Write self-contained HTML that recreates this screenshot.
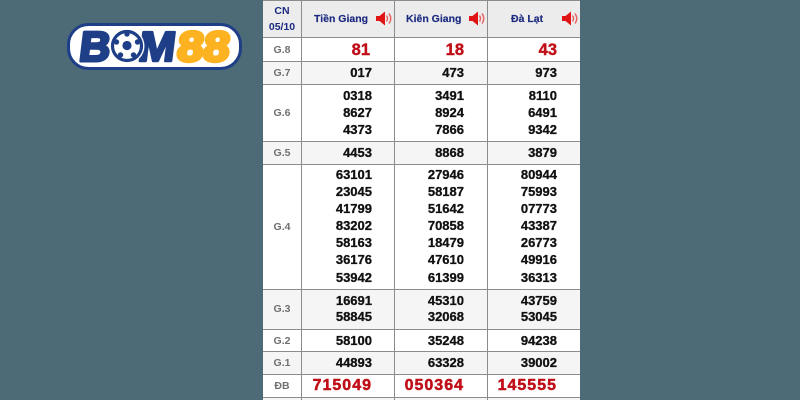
<!DOCTYPE html>
<html><head><meta charset="utf-8"><style>
html,body{margin:0;padding:0}
body{width:800px;height:400px;overflow:hidden;background:#4c6b77;position:relative;font-family:"Liberation Sans",sans-serif}
#t{position:absolute;left:263px;top:0;width:317px;height:400px;background:#fff;filter:blur(.35px)}
.b{position:absolute;left:0;width:317px;background:#f5f5f5}
.h{position:absolute;left:0;width:317px;height:1px;background:#8c8c8c}
.v{position:absolute;top:0;width:1px;height:400px;background:#8c8c8c}
.n{position:absolute;width:80px;text-align:right;font-weight:bold;font-size:13px;line-height:16px;color:#111;-webkit-text-stroke:.3px #111}
.c1{left:29px}.c2{left:121px}.c3{left:214px}
.l{position:absolute;left:0;width:38px;text-align:center;font-weight:bold;font-size:10.5px;line-height:12px;color:#707070}
.r{position:absolute;width:80px;text-align:right;font-weight:bold;font-size:16.5px;line-height:18px;color:#c00f18;-webkit-text-stroke:.4px #c00f18}
.d{position:absolute;width:80px;text-align:right;font-weight:bold;font-size:16px;line-height:18px;letter-spacing:1px;color:#c00f18;-webkit-text-stroke:.5px #c00f18}
.t{position:absolute;top:13px;font-weight:bold;font-size:10.5px;line-height:13px;color:#1c2a80;white-space:nowrap;-webkit-text-stroke:.15px #1c2a80}
svg.s{position:absolute;top:10px;width:16px;height:17px}
</style></head><body>
<svg style="position:absolute;left:66px;top:22px;filter:blur(.3px)" width="177" height="49" viewBox="0 0 177 49">
<rect x="2.500" y="2.500" width="172" height="44" rx="20" fill="#fff" stroke="#1e3f87" stroke-width="3"/>
<text transform="translate(12,39) skewX(-7)" font-family="Liberation Sans" font-weight="bold" font-size="42" fill="#1e3f87" textLength="31" lengthAdjust="spacingAndGlyphs" stroke="#1e3f87" stroke-width="3" stroke-linejoin="round">B</text>
<text transform="translate(71,39) skewX(-7)" font-family="Liberation Sans" font-weight="bold" font-size="42" fill="#1e3f87" textLength="37" lengthAdjust="spacingAndGlyphs" stroke="#1e3f87" stroke-width="2.500" stroke-linejoin="round">M</text>
<circle cx="61" cy="24" r="17.500" fill="#fff"/>
<circle cx="61" cy="24" r="14.500" fill="#fff" stroke="#1e3f87" stroke-width="3.200"/>
<circle cx="61" cy="23.500" r="4.600" fill="#1e3f87"/>
<g fill="#1e3f87"><circle cx="61" cy="12" r="2.700"/><circle cx="50.500" cy="20" r="2.700"/><circle cx="71.500" cy="20" r="2.700"/><circle cx="54.500" cy="33" r="2.700"/><circle cx="67.500" cy="33" r="2.700"/></g>
<text transform="translate(110,39) skewX(-7)" font-family="Liberation Sans" font-weight="bold" font-size="42" fill="#fdb221" textLength="52" lengthAdjust="spacingAndGlyphs" stroke="#fdb221" stroke-width="3.600" stroke-linejoin="round">88</text>
</svg>
<div id="t">
<div class="b" style="top:0;height:37px;background:#ececec"></div>
<div class="b" style="top:62px;height:22px"></div>
<div class="b" style="top:141px;height:23px"></div>
<div class="b" style="top:289px;height:40px"></div>
<div class="b" style="top:352px;height:22px"></div>
<div class="b" style="top:397px;height:3px"></div>
<div class="h" style="top:0"></div>
<div class="h" style="top:37px"></div><div class="h" style="top:61px"></div><div class="h" style="top:84px"></div>
<div class="h" style="top:141px"></div><div class="h" style="top:164px"></div><div class="h" style="top:289px"></div>
<div class="h" style="top:329px"></div><div class="h" style="top:351px"></div><div class="h" style="top:374px"></div><div class="h" style="top:397px"></div>
<div class="v" style="left:38px"></div><div class="v" style="left:131px"></div><div class="v" style="left:224px"></div>

<div class="l" style="top:3px;font-size:10.5px;line-height:16px;color:#1c2a80">CN<br>05/10</div>
<div class="t" style="left:51px">Tiền Giang</div>
<div class="t" style="left:143px">Kiên Giang</div>
<div class="t" style="left:248px">Đà Lạt</div>
<svg class="s" style="left:113px" viewBox="0 0 16 17"><path d="M0 6h3.500L9 1.500v14L3.500 11H0z" fill="#e01414"/><path d="M10.500 5.500q2 3 0 6M13 3.500q3.500 5 0 10" fill="none" stroke="#e86060" stroke-width="1.400"/></svg>
<svg class="s" style="left:206px" viewBox="0 0 16 17"><path d="M0 6h3.500L9 1.500v14L3.500 11H0z" fill="#e01414"/><path d="M10.500 5.500q2 3 0 6M13 3.500q3.500 5 0 10" fill="none" stroke="#e86060" stroke-width="1.400"/></svg>
<svg class="s" style="left:299px" viewBox="0 0 16 17"><path d="M0 6h3.500L9 1.500v14L3.500 11H0z" fill="#e01414"/><path d="M10.500 5.500q2 3 0 6M13 3.500q3.500 5 0 10" fill="none" stroke="#e86060" stroke-width="1.400"/></svg>

<div class="l" style="top:44px">G.8</div>
<div class="r" style="top:41px;left:27px">81</div><div class="r c2" style="top:41px">18</div><div class="r c3" style="top:41px">43</div>
<div class="l" style="top:67px">G.7</div>
<div class="n c1" style="top:65px">017</div><div class="n c2" style="top:65px">473</div><div class="n c3" style="top:65px">973</div>
<div class="l" style="top:107px">G.6</div>
<div class="n c1" style="top:87px;line-height:17.2px">0318<br>8627<br>4373</div>
<div class="n c2" style="top:87px;line-height:17.2px">3491<br>8924<br>7866</div>
<div class="n c3" style="top:87px;line-height:17.2px">8110<br>6491<br>9342</div>
<div class="l" style="top:147px">G.5</div>
<div class="n c1" style="top:145px">4453</div><div class="n c2" style="top:145px">8868</div><div class="n c3" style="top:145px">3879</div>
<div class="l" style="top:221px">G.4</div>
<div class="n c1" style="top:166px;line-height:17.1px">63101<br>23045<br>41799<br>83202<br>58163<br>36176<br>53942</div>
<div class="n c2" style="top:166px;line-height:17.1px">27946<br>58187<br>51642<br>70858<br>18479<br>47610<br>61399</div>
<div class="n c3" style="top:166px;line-height:17.1px">80944<br>75993<br>07773<br>43387<br>26773<br>49916<br>36313</div>
<div class="l" style="top:303px">G.3</div>
<div class="n c1" style="top:293px">16691<br>58845</div><div class="n c2" style="top:293px">45310<br>32068</div><div class="n c3" style="top:293px">43759<br>53045</div>
<div class="l" style="top:335px">G.2</div>
<div class="n c1" style="top:333px">58100</div><div class="n c2" style="top:333px">35248</div><div class="n c3" style="top:333px">94238</div>
<div class="l" style="top:357px">G.1</div>
<div class="n c1" style="top:355px">44893</div><div class="n c2" style="top:355px">63328</div><div class="n c3" style="top:355px">39002</div>
<div class="l" style="top:380px">ĐB</div>
<div class="d c1" style="top:377px">715049</div><div class="d c2" style="top:377px">050364</div><div class="d c3" style="top:377px">145555</div>
</div>
</body></html>
